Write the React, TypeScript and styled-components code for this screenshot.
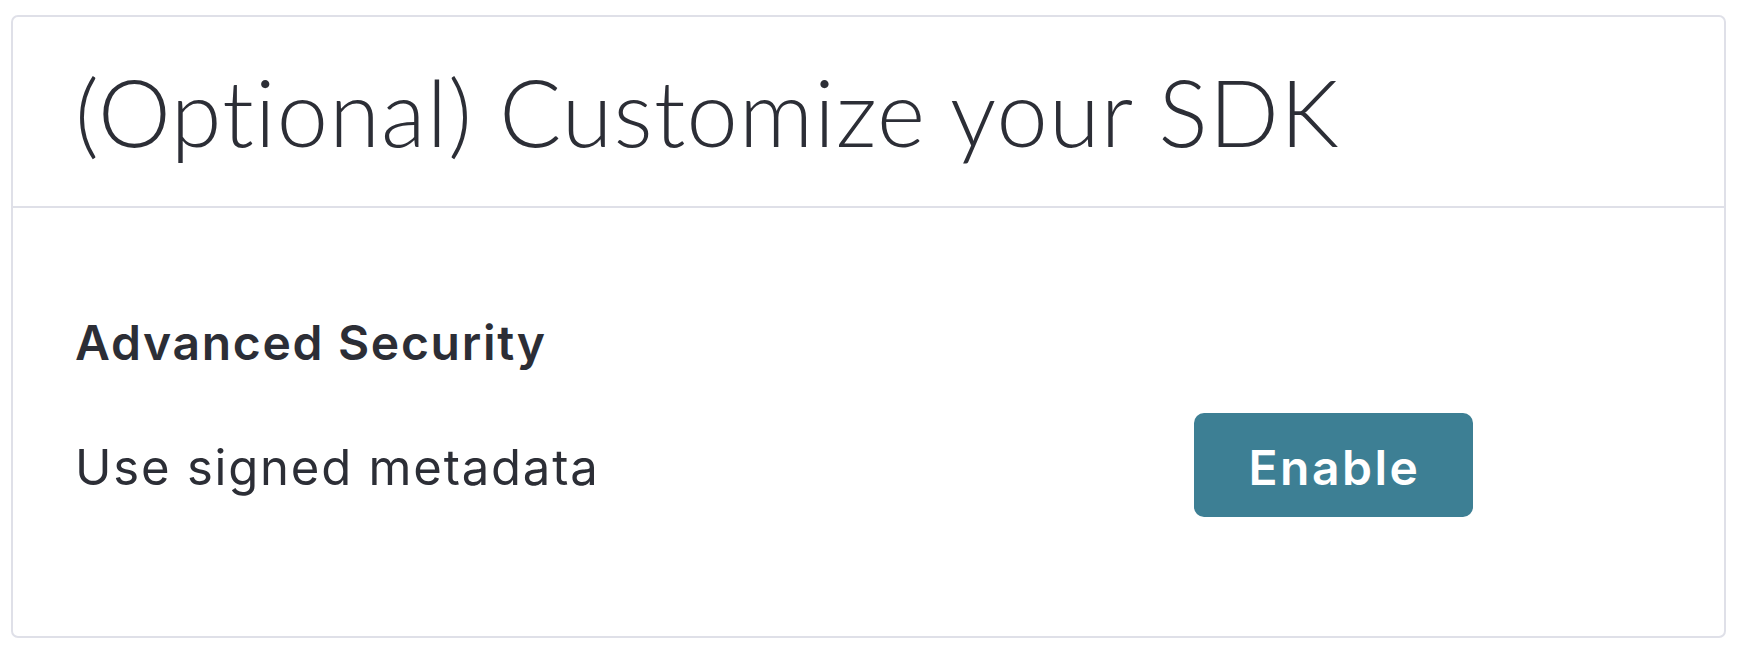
import React from "react";
import styled, { createGlobalStyle } from "styled-components";

const Global = createGlobalStyle`
  html, body { margin: 0; padding: 0; background: #ffffff; }
  body { font-family: Inter, Lato, "Noto Sans", sans-serif; color: #2c2e36; }
`;

const Page = styled.div`
  padding: 15px 14px 16px 11px;
`;

const Card = styled.section`
  border: 2px solid #dfe0e8;
  border-radius: 7px;
  background: #fff;
`;

const Header = styled.header`
  height: 189px;
  display: flex;
  align-items: center;
  padding-left: 62px;
  border-bottom: 2px solid #dfe0e8;
`;

const Title = styled.h1`
  margin: 0;
  font-family: Lato, sans-serif;
  font-weight: 300;
  font-size: 92px;
  line-height: 1;
  color: #2c2e36;
  letter-spacing: 1.2px;
`;

const Body = styled.div`
  padding: 111px 62px 119px 62px;
  display: flex;
  flex-direction: column;
  gap: 46px;
`;

const SectionTitle = styled.h2`
  margin: 0;
  font-family: Inter, sans-serif;
  font-size: 48px;
  font-weight: 600;
  line-height: 1;
  letter-spacing: 1.7px;
  color: #2c2e36;
`;

const Row = styled.div`
  display: grid;
  grid-template-columns: 1119px auto;
  align-items: center;
`;

const Label = styled.span`
  font-family: Inter, sans-serif;
  font-size: 49px;
  font-weight: 400;
  line-height: 1;
  letter-spacing: 1.8px;
  color: #2c2e36;
  padding-top: 4px;
`;

const Button = styled.button`
  width: 279px;
  height: 104px;
  border: none;
  border-radius: 10px;
  background: #3d7f94;
  color: #ffffff;
  font-family: Inter, sans-serif;
  font-size: 48px;
  font-weight: 600;
  letter-spacing: 2.5px;
  cursor: pointer;
  padding: 4px 0 0 2px;
`;

export default function App() {
  return (
    <>
      <Global />
      <Page>
        <Card>
          <Header>
            <Title>(Optional) Customize your SDK</Title>
          </Header>
          <Body>
            <SectionTitle>Advanced Security</SectionTitle>
            <Row>
              <Label>Use signed metadata</Label>
              <Button type="button">Enable</Button>
            </Row>
          </Body>
        </Card>
      </Page>
    </>
  );
}
